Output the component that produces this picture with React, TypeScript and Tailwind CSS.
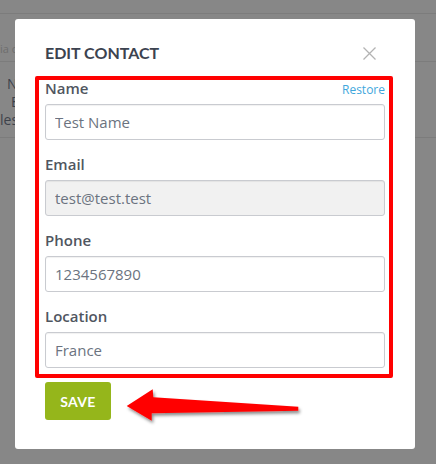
import React from 'react';

const fieldLabel = 'text-[15px] leading-[20px] font-semibold text-[#50565f]';
const fieldInput =
  'w-full h-[36px] rounded-[3px] border border-[#c9cbd0] px-[9px] text-[15px] text-[#6b7380] shadow-[inset_0_1px_1px_rgba(0,0,0,0.06)] outline-none';

const Field: React.FC<{ label: string; value: string; disabled?: boolean; extra?: React.ReactNode }> = ({
  label,
  value,
  disabled = false,
  extra,
}) => {
  return (
    <div className="mb-[14px]">
      <div className="flex items-baseline justify-between h-[20px] mb-[6px]">
        <span className={fieldLabel}>{label}</span>
        {extra}
      </div>
      <input
        readOnly
        value={value}
        className={`${fieldInput} ${disabled ? 'bg-[#f1f1f1]' : 'bg-white'}`}
        style={{ fontFamily: '"Open Sans", sans-serif' }}
      />
    </div>
  );
};

export default function App() {
  return (
    <div
      className="relative w-[436px] h-[464px] overflow-hidden bg-[#878787]"
      style={{ fontFamily: '"Open Sans", sans-serif' }}
    >
      {/* page behind the overlay */}
      <div className="h-[14px] border-b border-[#7c7c7c]" />
      <div className="h-[48px] border-b border-[#7c7c7c] pt-[28px] text-[11px] leading-[14px] text-[#6e6e6e]">
        ia contact
      </div>
      <div className="h-[76px] border-b border-[#7c7c7c] pt-[13px] text-[14px] leading-[18px] text-[#3d424b]">
        <div className="pl-[7px]">Name</div>
        <div className="pl-[11px]">Email</div>
        <div>lest</div>
      </div>

      {/* modal */}
      <div className="absolute left-[15px] top-[19px] w-[400px] h-[430px] rounded-[3px] bg-white px-[30px] pt-[22px]">
        <div className="flex items-center justify-between">
          <h2
            className="text-[16px] leading-[24px] font-bold text-[#3c4350]"
            style={{ fontFamily: 'Lato, sans-serif' }}
          >
            EDIT CONTACT
          </h2>
          <svg width="13" height="13" viewBox="0 0 13 13" className="mr-[9px]">
            <path d="M0.5 0.5 L12.5 12.5 M12.5 0.5 L0.5 12.5" stroke="#b3b3b3" strokeWidth="1.3" />
          </svg>
        </div>

        <div className="mt-[13px]">
          <Field
            label="Name"
            value="Test Name"
            extra={<span className="text-[12px] leading-[20px] text-[#3fa7dc]">Restore</span>}
          />
          <Field label="Email" value="test@test.test" disabled />
          <Field label="Phone" value="1234567890" />
          <Field label="Location" value="France" />
        </div>

        <button
          className="w-[66px] h-[38px] rounded-[3px] bg-[#95b61b] text-white text-[14px] font-bold tracking-[0.3px]"
          style={{ fontFamily: 'Lato, sans-serif' }}
        >
          SAVE
        </button>

        {/* annotation box */}
        <div className="absolute left-[20px] top-[57px] w-[358px] h-[302px] border-[4px] border-[#ff0000] rounded-[2px] pointer-events-none" />
      </div>

      {/* annotation arrow */}
      <svg className="absolute left-[120px] top-[380px]" width="190" height="50" viewBox="0 0 190 50">
        <defs>
          <filter id="sh" x="-20%" y="-50%" width="140%" height="200%">
            <feDropShadow dx="1.5" dy="2.5" stdDeviation="1.5" floodColor="#000" floodOpacity="0.45" />
          </filter>
        </defs>
        <polygon
          points="6.7,26 32.7,9.3 33.3,17.3 178.3,26.7 178.3,30.7 31.7,33.3 31.7,40.7"
          fill="#ff0000"
          filter="url(#sh)"
        />
      </svg>
    </div>
  );
}
